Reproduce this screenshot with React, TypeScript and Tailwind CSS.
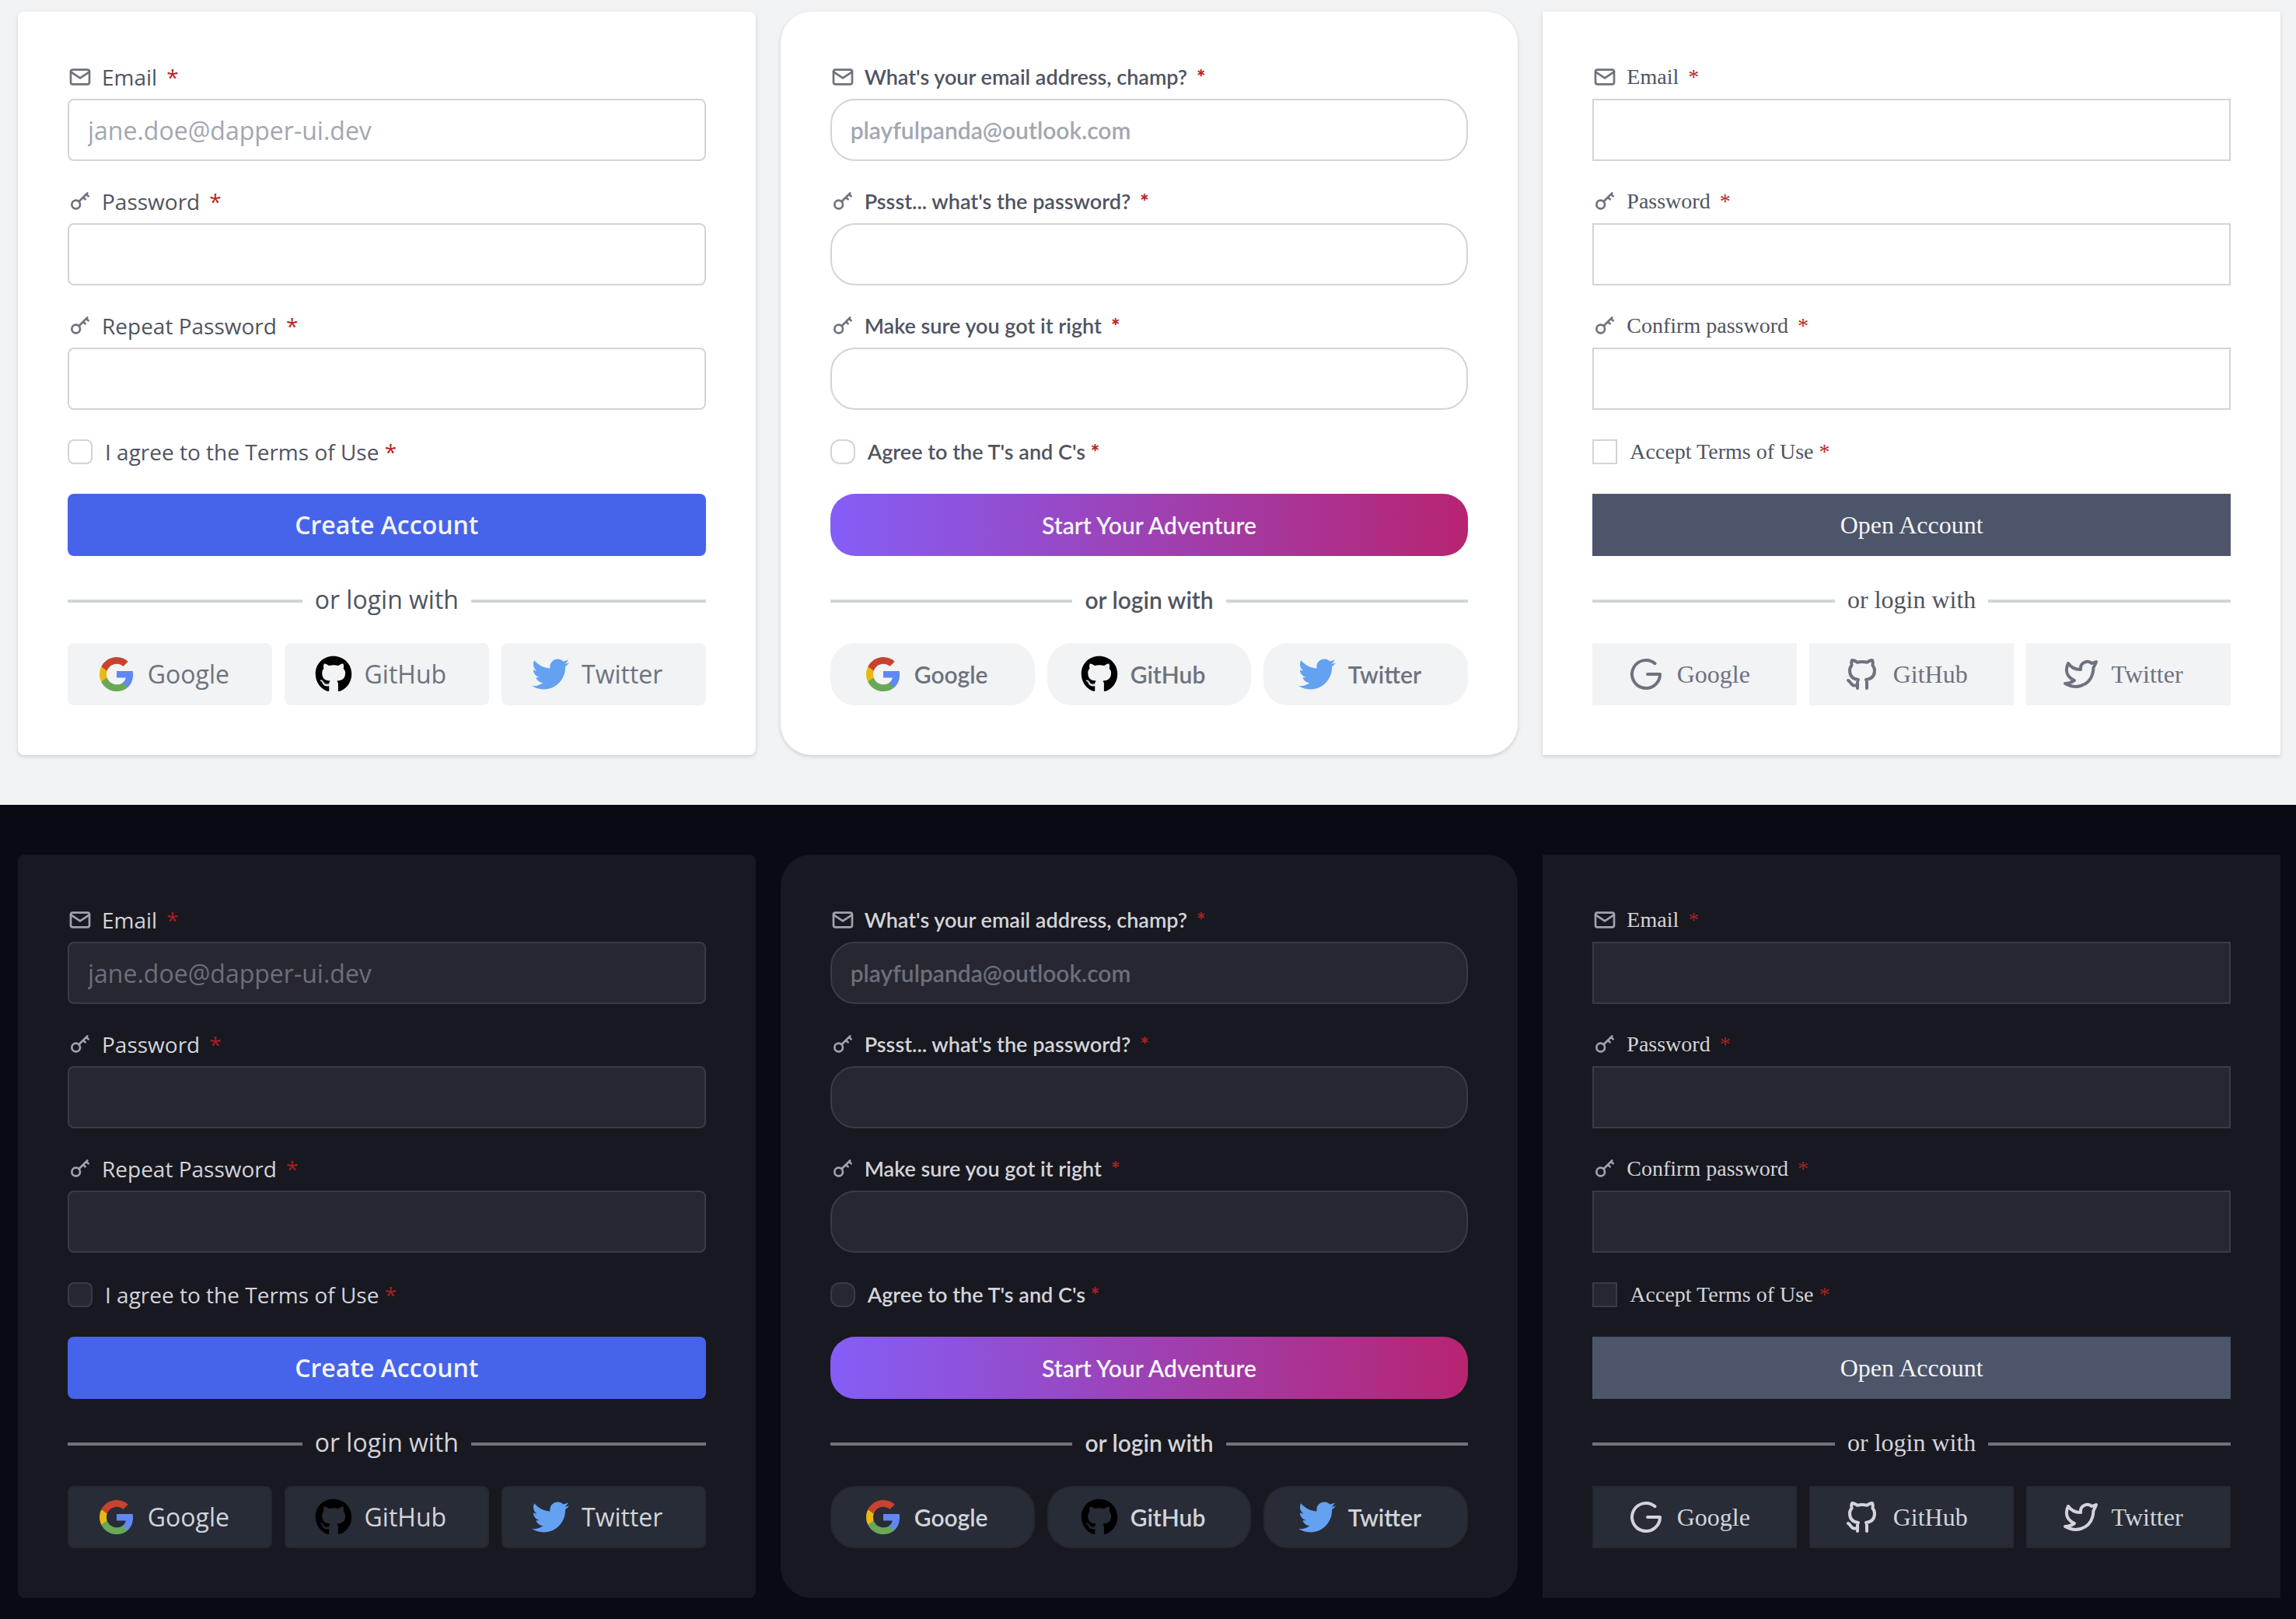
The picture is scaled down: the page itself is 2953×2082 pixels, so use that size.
import React, { useId } from "react";
import { FaGithub, FaTwitter } from "react-icons/fa";

type Mode = "light" | "dark";
type IconProps = { className?: string };

function Outline({ className, children }: { className?: string; children: React.ReactNode }) {
  return (
    <svg
      viewBox="0 0 24 24"
      fill="none"
      stroke="currentColor"
      strokeWidth="2"
      strokeLinecap="round"
      strokeLinejoin="round"
      aria-hidden="true"
      className={className}
    >
      {children}
    </svg>
  );
}

const MailIcon = ({ className }: IconProps) => (
  <Outline className={className}>
    <rect x="3" y="5" width="18" height="14" rx="2" />
    <path d="M3 7l9 6l9 -6" />
  </Outline>
);

const KeyIcon = ({ className }: IconProps) => (
  <Outline className={className}>
    <circle cx="8" cy="15" r="4" />
    <path d="M10.85 12.15L19 4M18 5l2 2M15 8l2 2" />
  </Outline>
);

const GoogleOutline = ({ className }: IconProps) => (
  <Outline className={className}>
    <path d="M17.788 5.108a9 9 0 1 0 3.212 6.892h-8" />
  </Outline>
);

const GithubOutline = ({ className }: IconProps) => (
  <Outline className={className}>
    <path d="M9 19c-4.3 1.4 -4.3 -2.5 -6 -3m12 5v-3.5c0 -1 .1 -1.4 -.5 -2c2.8 -.3 5.5 -1.4 5.5 -6a4.6 4.6 0 0 0 -1.3 -3.2a4.2 4.2 0 0 0 -.1 -3.2s-1.1 -.3 -3.5 1.3a12.3 12.3 0 0 0 -6.2 0c-2.4 -1.6 -3.5 -1.3 -3.5 -1.3a4.2 4.2 0 0 0 -.1 3.2a4.6 4.6 0 0 0 -1.3 3.2c0 4.6 2.7 5.7 5.5 6c-.6 .6 -.6 1.2 -.5 2v3.5" />
  </Outline>
);

const TwitterOutline = ({ className }: IconProps) => (
  <Outline className={className}>
    <path d="M22 4.01c-1 .49 -1.98 .689 -3 .99c-1.121 -1.265 -2.783 -1.335 -4.38 -.737s-2.643 2.06 -2.62 3.737v1c-3.245 .083 -6.135 -1.395 -8 -4c0 0 -4.182 7.433 4 11c-1.872 1.247 -3.739 2.088 -6 2c3.308 1.803 6.913 2.423 10.034 1.517c3.58 -1.04 6.522 -3.723 7.651 -7.742a13.84 13.84 0 0 0 .497 -3.753c0 -.249 1.51 -2.772 1.818 -4.013z" />
  </Outline>
);

const GoogleColor = ({ className }: IconProps) => (
  <svg viewBox="0 0 24 24" aria-hidden="true" className={className}>
    <path fill="#6187f3" d="M22.56 12.25c0-.78-.07-1.53-.2-2.25H12v4.26h5.92c-.26 1.37-1.04 2.53-2.21 3.31v2.77h3.57c2.08-1.92 3.28-4.74 3.28-8.09z" />
    <path fill="#6aa857" d="M12 23c2.97 0 5.46-.98 7.28-2.66l-3.57-2.77c-.98.66-2.23 1.06-3.71 1.06-2.86 0-5.29-1.93-6.16-4.53H2.18v2.84C3.99 20.53 7.7 23 12 23z" />
    <path fill="#e9b813" d="M5.84 14.09c-.22-.66-.35-1.36-.35-2.09s.13-1.43.35-2.09V7.07H2.18C1.43 8.55 1 10.22 1 12s.43 3.45 1.18 4.93l2.85-2.22.81-.62z" />
    <path fill="#c74330" d="M12 5.38c1.62 0 3.06.56 4.21 1.64l3.15-3.15C17.45 2.09 14.97 1 12 1 7.7 1 3.99 3.47 2.18 7.07l3.66 2.84c.87-2.6 3.3-4.53 6.16-4.53z" />
  </svg>
);

const GithubColor = ({ className }: IconProps) => <FaGithub className={`${className} text-black`} aria-hidden="true" />;
const TwitterColor = ({ className }: IconProps) => <FaTwitter className={`${className} text-[#64a1f0]`} aria-hidden="true" />;

const palette = {
  light: {
    page: "bg-[#f2f3f5]",
    card: "bg-white shadow-[0_2px_6px_rgba(0,0,0,0.1),0_2px_4px_rgba(0,0,0,0.06)]",
    text: "text-[#50545f]",
    icon: "text-[#6e727d]",
    box: "border-[#d2d4d7] bg-white",
    placeholder: "placeholder:text-[#a3a7b1]",
    star: "text-[#bb2424]",
    line: "bg-[#d1d5d8]",
    provider: "border-[#f1f3f5] bg-[#f1f3f5] text-[#6e727d]",
  },
  dark: {
    page: "bg-[#0a0a14]",
    card: "bg-[#181820]",
    text: "text-[#d2d4da]",
    icon: "text-[#9fa3ae]",
    box: "border-[#3b3b46] bg-[#272731]",
    placeholder: "placeholder:text-[#6b6f7b]",
    star: "text-[#a32222]",
    line: "bg-[#6e727d]",
    provider: "border-[#272730] bg-[#272c37] text-[#d2d4da]",
  },
};

const themes = [
  {
    font: "font-['Open_Sans',sans-serif]",
    body: "font-normal",
    label: "text-[28px]",
    control: "text-[32px]",
    strong: "font-semibold",
    starWeight: "font-normal",
    cardRadius: "rounded-lg",
    radius: "rounded-lg",
    checkRadius: "rounded-lg",
    submit: "bg-[#4664e9]",
    fields: ["Email", "Password", "Repeat Password"],
    placeholder: "jane.doe@dapper-ui.dev",
    terms: "I agree to the Terms of Use",
    action: "Create Account",
    providers: [GoogleColor, GithubColor, TwitterColor],
  },
  {
    font: "font-['Lato',sans-serif]",
    body: "font-semibold",
    label: "text-[27px]",
    control: "text-[30px]",
    strong: "font-semibold",
    starWeight: "font-black",
    cardRadius: "rounded-[40px]",
    radius: "rounded-[32px]",
    checkRadius: "rounded-xl",
    submit: "bg-[linear-gradient(to_right,#845ef7,#b72471)]",
    fields: ["What's your email address, champ?", "Pssst... what's the password?", "Make sure you got it right"],
    placeholder: "playfulpanda@outlook.com",
    terms: "Agree to the T's and C's",
    action: "Start Your Adventure",
    providers: [GoogleColor, GithubColor, TwitterColor],
  },
  {
    font: "font-['Liberation_Serif',serif]",
    body: "font-normal",
    label: "text-[28px]",
    control: "text-[32px]",
    strong: "font-normal",
    starWeight: "font-normal",
    cardRadius: "rounded-none",
    radius: "rounded-none",
    checkRadius: "rounded-none",
    submit: "bg-[#4d556a]",
    fields: ["Email", "Password", "Confirm password"],
    placeholder: "",
    terms: "Accept Terms of Use",
    action: "Open Account",
    providers: [GoogleOutline, GithubOutline, TwitterOutline],
  },
];

const providerNames = ["Google", "GitHub", "Twitter"];

function SignUpCard({ theme, mode }: { theme: (typeof themes)[number]; mode: Mode }) {
  const id = useId();
  const c = palette[mode];
  return (
    <form
      onSubmit={(e) => e.preventDefault()}
      className={`flex min-w-0 flex-col gap-8 p-16 ${theme.font} ${theme.body} ${theme.cardRadius} ${c.card} ${c.text}`}
    >
      {theme.fields.map((name, i) => {
        const Icon = i === 0 ? MailIcon : KeyIcon;
        return (
          <div key={name} className="flex flex-col gap-2">
            <label htmlFor={`${id}-${i}`} className={`flex items-center gap-3 leading-10 ${theme.label}`}>
              <Icon className={`size-8 shrink-0 ${c.icon}`} />
              <span>{name}</span>
              <span className={`${c.star} ${theme.starWeight}`}>*</span>
            </label>
            <input
              id={`${id}-${i}`}
              type={i === 0 ? "email" : "password"}
              placeholder={i === 0 ? theme.placeholder : ""}
              className={`h-20 w-full border-2 px-6 outline-none ${theme.control} ${theme.radius} ${c.box} ${c.placeholder}`}
            />
          </div>
        );
      })}

      <div className="flex items-center gap-4">
        <input
          id={`${id}-terms`}
          type="checkbox"
          className={`size-8 shrink-0 appearance-none border-2 checked:bg-[#4664e9] ${theme.checkRadius} ${c.box}`}
        />
        <label htmlFor={`${id}-terms`} className={`leading-11 ${theme.label}`}>
          {theme.terms} <span className={`${c.star} ${theme.starWeight}`}>*</span>
        </label>
      </div>

      <button
        type="submit"
        className={`h-20 w-full text-[#f3f4f6] ${theme.control} ${theme.strong} ${theme.radius} ${theme.submit}`}
      >
        {theme.action}
      </button>

      <div className={`flex items-center gap-4 leading-12 ${theme.control}`}>
        <span className={`mt-1 h-1 flex-1 ${c.line}`} />
        <span>or login with</span>
        <span className={`mt-1 h-1 flex-1 ${c.line}`} />
      </div>

      <div className="grid grid-cols-3 gap-4">
        {providerNames.map((name, i) => {
          const Icon = theme.providers[i];
          return (
            <button
              key={name}
              type="button"
              className={`flex h-20 items-center justify-center gap-4 border-2 pr-4 ${theme.control} ${theme.radius} ${c.provider}`}
            >
              <Icon className="size-12 shrink-0" />
              <span>{name}</span>
            </button>
          );
        })}
      </div>
    </form>
  );
}

function Showcase({ mode, className }: { mode: Mode; className: string }) {
  return (
    <section className={`grid grid-cols-3 items-start gap-8 pr-5 pl-[23px] ${palette[mode].page} ${className}`}>
      {themes.map((theme) => (
        <SignUpCard key={theme.action} theme={theme} mode={mode} />
      ))}
    </section>
  );
}

export default function App() {
  return (
    <main className="flex min-h-screen flex-col">
      <Showcase mode="light" className="pt-[15px] pb-16" />
      <Showcase mode="dark" className="grow pt-16 pb-[27px]" />
    </main>
  );
}
